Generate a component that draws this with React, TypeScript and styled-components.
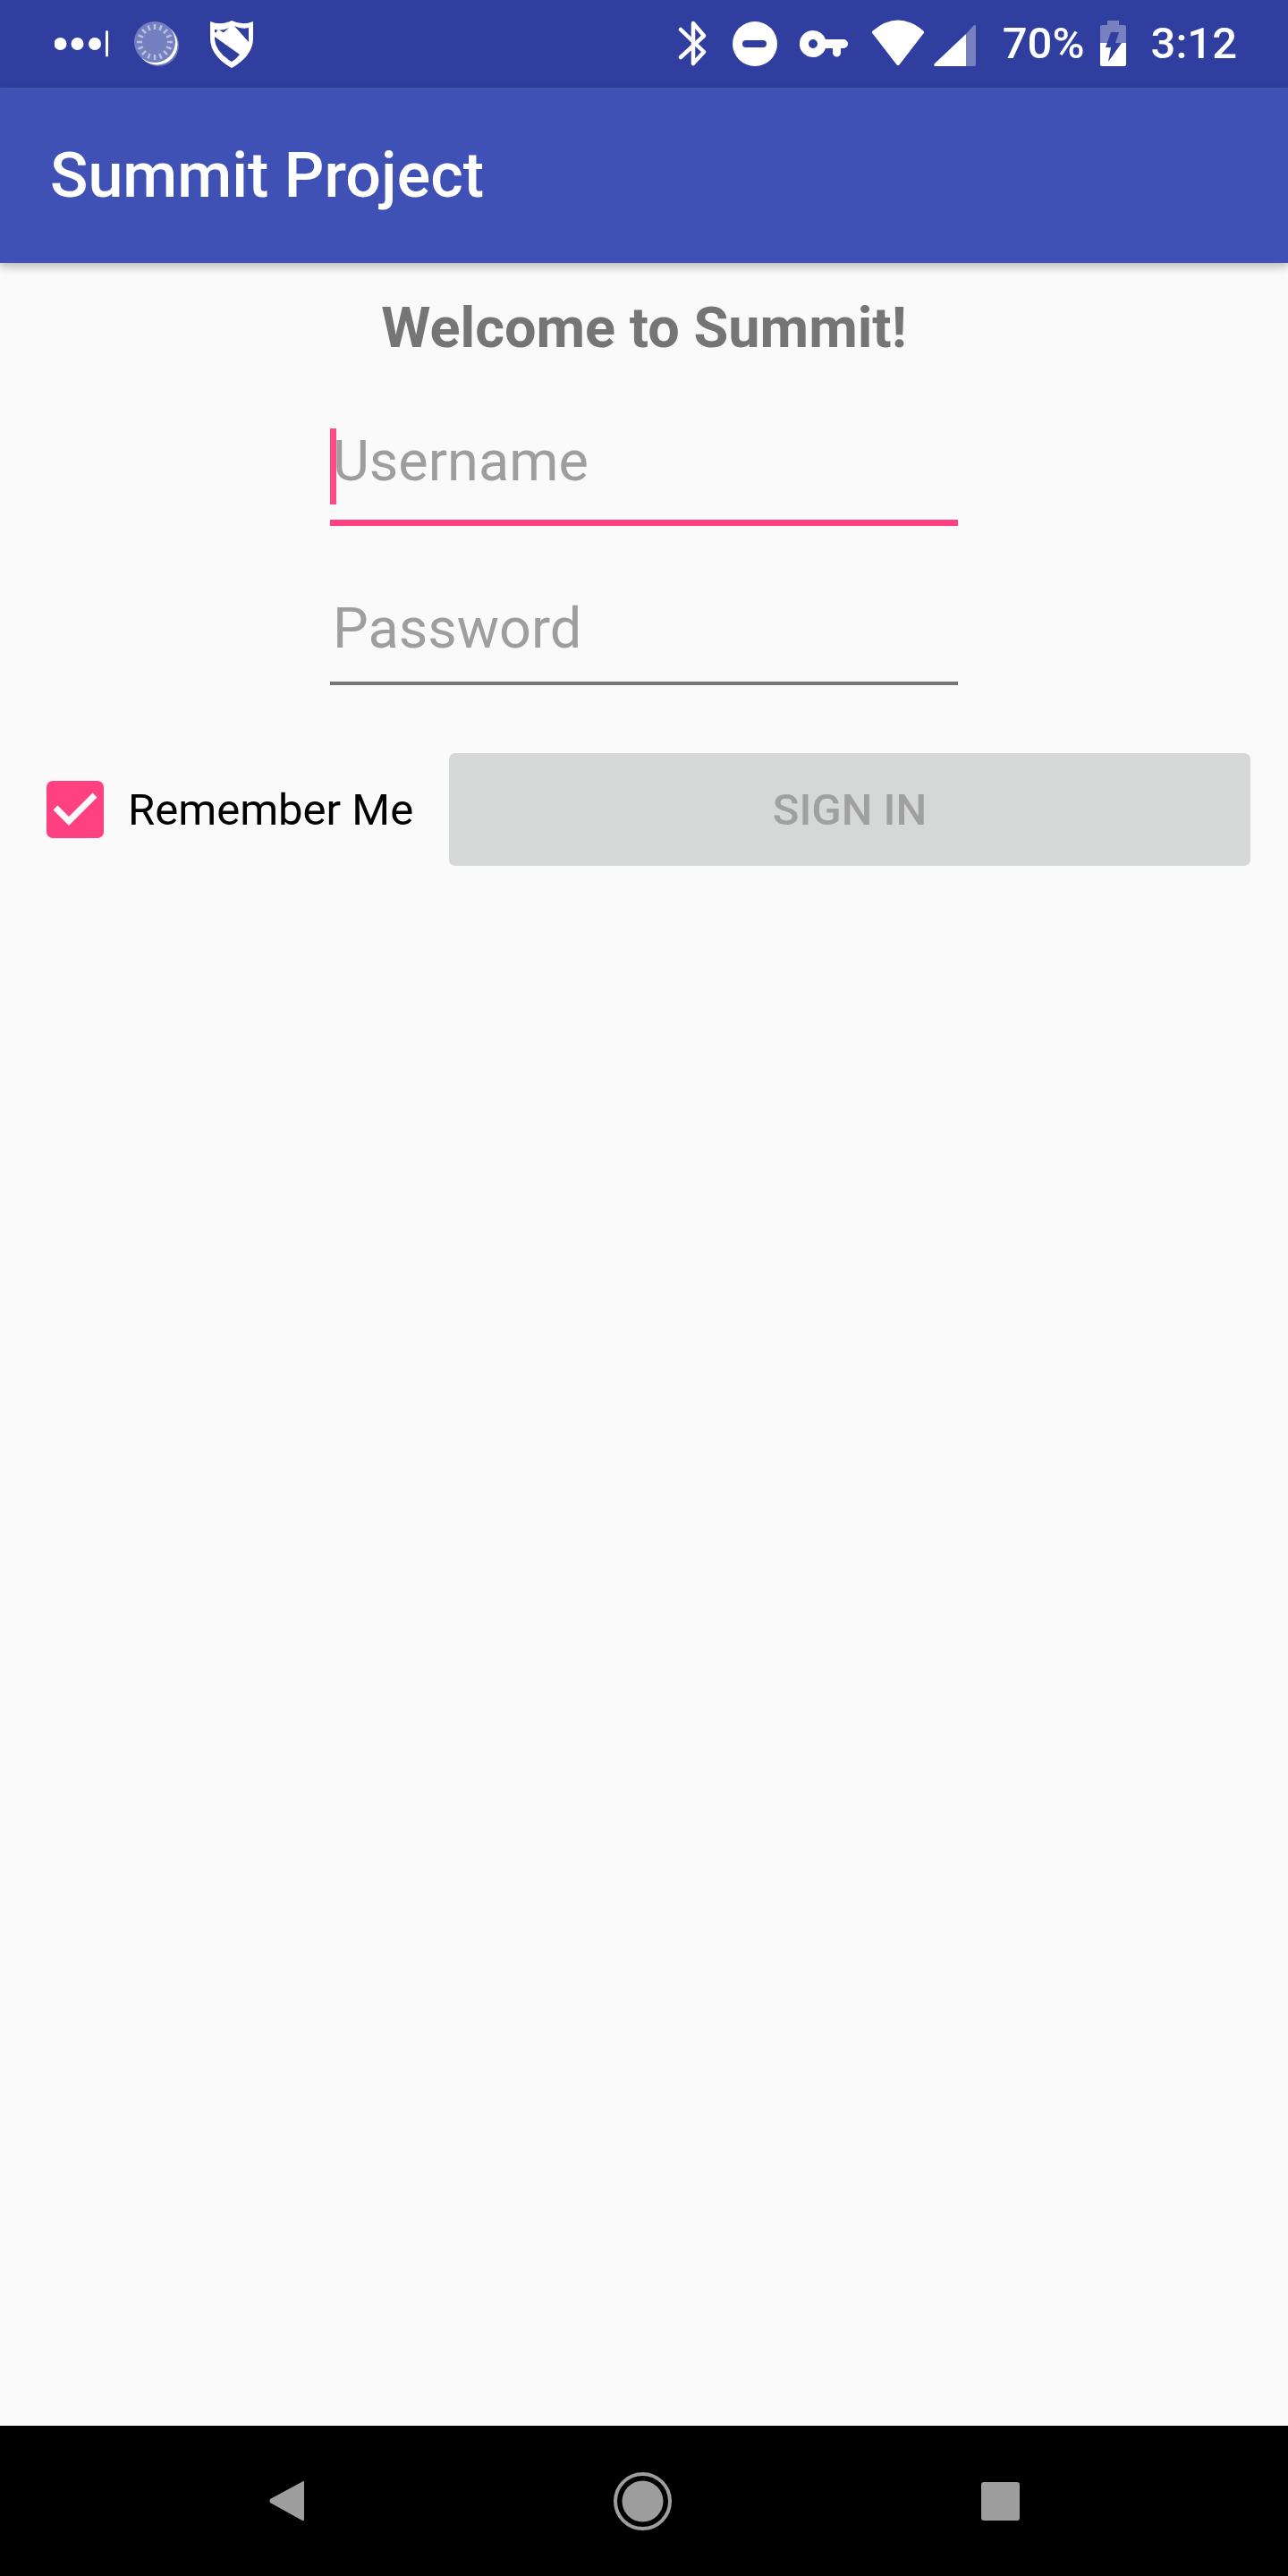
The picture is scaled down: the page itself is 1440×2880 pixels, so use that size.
import React from 'react'
import styled, { createGlobalStyle } from 'styled-components'

const GlobalStyle = createGlobalStyle`
  html, body {
    margin: 0;
    padding: 0;
    background: #fafafa;
  }
  * {
    box-sizing: border-box;
  }
`

const Screen = styled.div`
  display: flex;
  flex-direction: column;
  width: 1440px;
  height: 2880px;
  background: #fafafa;
  font-family: Roboto, "Liberation Sans", sans-serif;
`

const StatusBar = styled.div`
  display: flex;
  align-items: center;
  flex: none;
  height: 98px;
  padding: 0 57px 0 61px;
  background: #303f9f;
  color: #fff;
`

const StatusIcon = styled.svg<{ $gap?: number }>`
  display: block;
  flex: none;
  height: 98px;
  margin-left: ${(p) => p.$gap ?? 0}px;
`

const StatusSpacer = styled.div`
  flex: 1;
`

const StatusText = styled.span<{ $gap: number }>`
  margin-left: ${(p) => p.$gap}px;
  font-size: 49px;
  font-weight: 500;
  line-height: 98px;
  white-space: nowrap;
`

const AppBar = styled.header`
  position: relative;
  z-index: 1;
  display: flex;
  align-items: center;
  flex: none;
  height: 196px;
  padding-left: 56px;
  background: #3f51b5;
  box-shadow: 0 4px 10px rgba(0, 0, 0, 0.28);
`

const Title = styled.h1`
  margin: 0;
  color: #fff;
  font-size: 70px;
  font-weight: 500;
`

const Content = styled.main`
  flex: 1;
  padding-top: 36px;
`

const Welcome = styled.h2`
  margin: 0 0 75px;
  color: #757575;
  font-size: 63px;
  font-weight: 700;
  line-height: 74px;
  text-align: center;
`

const Field = styled.div<{ $focused?: boolean }>`
  position: relative;
  width: 702px;
  height: ${(p) => (p.$focused ? 109 : 100)}px;
  margin: 0 auto ${(p) => (p.$focused ? 78 : 76)}px;
  padding-left: 3px;
  border-bottom: ${(p) => (p.$focused ? '7px solid #ff4081' : '4px solid #757575')};
`

const Placeholder = styled.span`
  display: block;
  color: #9e9e9e;
  font-size: 63px;
  line-height: 74px;
`

const Caret = styled.span`
  position: absolute;
  left: 0;
  top: 0;
  width: 7px;
  height: 85px;
  background: #ff4081;
  opacity: 0.95;
`

const Actions = styled.div`
  display: flex;
  align-items: center;
  padding: 0 42px 0 52px;
`

const CheckBox = styled.span`
  display: flex;
  align-items: center;
  justify-content: center;
  flex: none;
  width: 64px;
  height: 64px;
  border-radius: 7px;
  background: #ff4081;
`

const CheckLabel = styled.span`
  margin-left: 27px;
  color: #000;
  font-size: 49px;
  white-space: nowrap;
`

const SignInButton = styled.button`
  flex: none;
  width: 896px;
  height: 126px;
  margin-left: auto;
  padding: 0;
  border: 0;
  border-radius: 7px;
  background: #d6d7d7;
  color: #a0a0a0;
  font-family: inherit;
  font-size: 49px;
  font-weight: 500;
`

const NavBar = styled.nav`
  display: flex;
  align-items: center;
  justify-content: space-between;
  flex: none;
  height: 168px;
  padding: 0 300px 0 301px;
  background: #000;
`

const NavIcon = styled.svg`
  display: block;
  flex: none;
  fill: #9e9e9e;
`

const SPINNER_TICKS = Array.from({ length: 16 }, (_, i) => i * 22.5)

const App: React.FC = () => {
  return (
    <Screen>
      <GlobalStyle />
      <StatusBar>
        <StatusIcon width="60" viewBox="61 0 60 98" fill="#fff">
          <circle cx="67.5" cy="49" r="7" />
          <circle cx="86.5" cy="49" r="7" />
          <circle cx="106" cy="49" r="7" />
          <rect x="118" y="34" width="3" height="29.5" rx="1.5" />
        </StatusIcon>
        <StatusIcon $gap={29} width="50" viewBox="150 0 50 98">
          <circle cx="177" cy="51" r="23" fill="#6d79bb" />
          <circle cx="175.5" cy="49.5" r="23" fill="#fff" />
          <circle cx="173" cy="47" r="23" fill="#7480bf" />
          {SPINNER_TICKS.map((angle) => (
            <line
              key={angle}
              x1="173"
              y1="27"
              x2="173"
              y2="33"
              stroke="#b9bfdf"
              strokeWidth="2.5"
              transform={`rotate(${angle} 173 47)`}
            />
          ))}
        </StatusIcon>
        <StatusIcon $gap={35} width="48" viewBox="235 0 48 98">
          <path
            d="M235 24 Q247 29 259 23 Q271 29 283 24 V44 Q282 63 259 76 Q236 63 235 44 Z"
            fill="#fff"
          />
          <path d="M240 33 Q249 35 256 31 L247 39 L240 36 Z" fill="#303f9f" />
          <path d="M262 29 Q270 33 278 31 V47 Z" fill="#303f9f" />
          <path d="M240 42 L271 61 Q267 65 264 63 L240 47 Z" fill="#303f9f" opacity="0" />
          <path d="M240 41 L268 61 Q264 66 259 69 Q241 58 240 44 Z" fill="#303f9f" />
          <path d="M244 33 L275 51 L272 53 L241 37 Z" fill="#fff" />
        </StatusIcon>
        <StatusSpacer />
        <StatusIcon width="32" viewBox="760 0 32 98" fill="none" stroke="#fff" strokeWidth="4.5" strokeLinecap="round" strokeLinejoin="round">
          <path d="M763 33 L789 58 L777 71 V26 L789 40 L763 64" />
        </StatusIcon>
        <StatusIcon $gap={29} width="50" viewBox="821 0 50 98">
          <circle cx="846" cy="49" r="25" fill="#fff" />
          <rect x="832" y="45" width="27" height="8" rx="4" fill="#303f9f" />
        </StatusIcon>
        <StatusIcon $gap={25} width="54" viewBox="896 0 54 98" fill="#fff">
          <path
            fillRule="evenodd"
            d="M911 34 A15 15 0 0 1 925 44 H945 A5 5 0 0 1 945 54 H942 V59 A4.5 4.5 0 0 1 933 59 V54 H925 A15 15 0 1 1 911 34 Z M911 44 A5 5 0 1 0 911 54 A5 5 0 1 0 911 44 Z"
          />
        </StatusIcon>
        <StatusIcon $gap={26} width="60" viewBox="976 0 60 98">
          <path
            d="M979 36 Q1006 13 1033 36 L1006 71 Z"
            fill="#fff"
            stroke="#fff"
            strokeWidth="4"
            strokeLinejoin="round"
          />
        </StatusIcon>
        <StatusIcon $gap={10} width="47" viewBox="1046 0 47 98">
          <path d="M1082 38 L1090 29 Q1093 26 1093 30 V72 Q1093 74 1091 74 H1082 Z" fill="#7781c0" />
          <path d="M1082 38 V74 H1048 Q1045 74 1047 71 Z" fill="#fff" />
        </StatusIcon>
        <StatusText $gap={30}>70%</StatusText>
        <StatusIcon $gap={17} width="29" viewBox="1231 0 29 98">
          <path d="M1239 23 H1252 V28 H1258 Q1260 28 1260 30 V48 H1231 V30 Q1231 28 1233 28 H1239 Z" fill="#7781c0" />
          <path d="M1231 48 H1260 V72 Q1260 74 1258 74 H1233 Q1231 74 1231 72 Z" fill="#fff" />
          <path d="M1243 36 H1252 L1248 48 H1255 L1240 69 L1243 53 H1237 Z" fill="#303f9f" />
        </StatusIcon>
        <StatusText $gap={28}>3:12</StatusText>
      </StatusBar>

      <AppBar>
        <Title>Summit Project</Title>
      </AppBar>

      <Content>
        <Welcome>Welcome to Summit!</Welcome>
        <Field $focused>
          <Placeholder>Username</Placeholder>
          <Caret />
        </Field>
        <Field>
          <Placeholder>Password</Placeholder>
        </Field>
        <Actions>
          <CheckBox>
            <svg width="50" height="40" viewBox="0 0 50 40">
              <path d="M3 18 L18 33 L47 4" fill="none" stroke="#fafafa" strokeWidth="7" />
            </svg>
          </CheckBox>
          <CheckLabel>Remember Me</CheckLabel>
          <SignInButton type="button">SIGN IN</SignInButton>
        </Actions>
      </Content>

      <NavBar>
        <NavIcon width="39" height="46" viewBox="0 0 39 46">
          <path d="M38 1 Q39 0 39 3 V43 Q39 46 37 45 L1 25 Q0 23 1 21 Z" />
        </NavIcon>
        <NavIcon width="65" height="65" viewBox="0 0 65 65">
          <circle cx="32.5" cy="32.5" r="23" />
          <circle cx="32.5" cy="32.5" r="30.5" fill="none" stroke="#9e9e9e" strokeWidth="4" />
        </NavIcon>
        <NavIcon width="43" height="43" viewBox="0 0 43 43">
          <rect width="43" height="43" rx="3" />
        </NavIcon>
      </NavBar>
    </Screen>
  )
}

export default App
